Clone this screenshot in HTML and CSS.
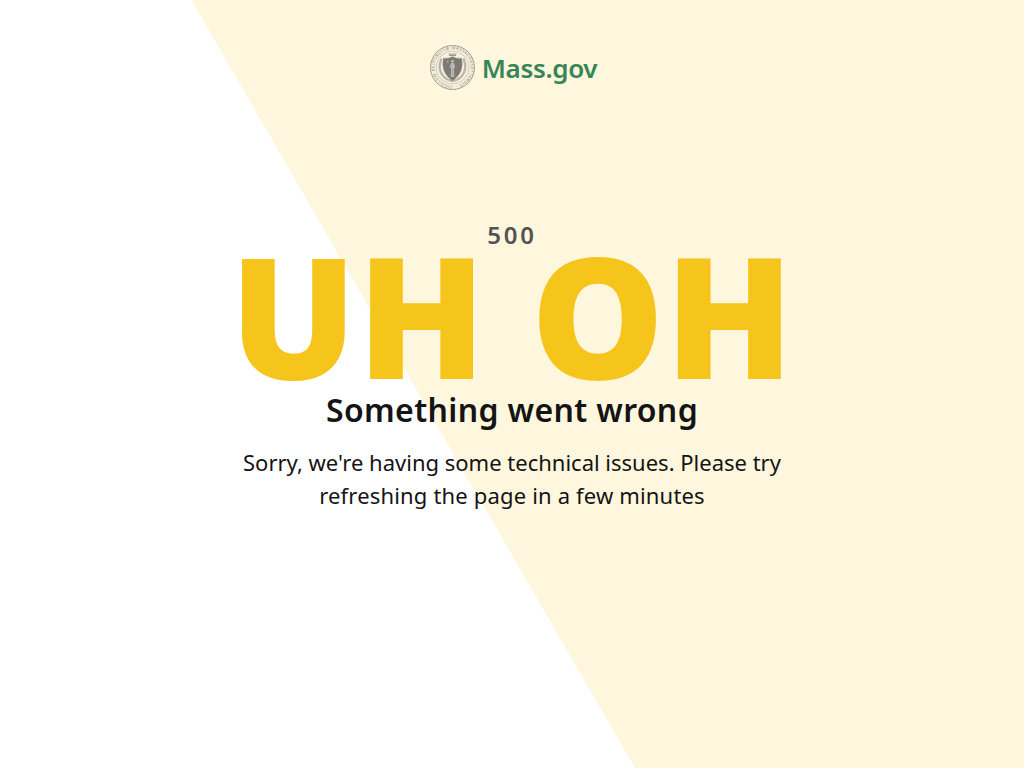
FILE: index.html
```
<!DOCTYPE html>
<html lang="en">
<head>
<meta charset="utf-8">
<title>Mass.gov</title>
<link rel="stylesheet" href="styles.css">
</head>
<body>
<div class="page">
  <header class="header">
    <svg class="seal" viewBox="0.5 0.5 45 45" aria-hidden="true">
      <defs><path id="ring" d="M23 41.2A18.2 18.2 0 1 1 23.1 41.2"/></defs>
      <circle cx="23" cy="23" r="22" fill="#f6efdb" stroke="#a29e94" stroke-width="1"/>
      <text class="seal-text"><textPath href="#ring" textLength="110">SIGILLUM REIPUBLICÆ MASSACHUSETTENSIS ·</textPath></text>
      <circle cx="23" cy="23" r="16.4" fill="#f9f1dd" stroke="#b7b2a6" stroke-width=".6"/>
      <path d="M19 9.600h8M19.500 11h7" fill="none" stroke="#99958b" stroke-width="1"/>
      <path d="M12 14Q7.500 25 14 32q4 4 9 4.500 5-.500 9-4.500Q38.500 25 34 14" fill="none" stroke="#bcb6a8" stroke-width="2.300"/>
      <path d="M14 13.700q4.500.800 9-1.500 4.500 2.300 9 1.500 3.200 14.200-9 22.500-12.200-8.300-9-22.500z" fill="#7c7a76" stroke="#918e86" stroke-width=".6"/>
      <circle cx="23" cy="16.800" r="1.200" fill="#cec8b9"/>
      <path d="M21.500 18.400h3l1.100 4.200-1.200 1.600.4 8.300h-3.600l.4-8.300-1.200-1.600z" fill="#bdb8ab"/>
      <path d="M23 24v8" stroke="#a29e94" stroke-width=".6"/>
      <circle cx="18.300" cy="17.200" r=".7" fill="#d6d0c0"/>
    </svg>
    <span class="brand">Mass.gov</span>
  </header>
  <main class="message">
    <div class="code">500</div>
    <div class="title">UH OH</div>
    <h1 class="subtitle">Something went wrong</h1>
    <p class="text">Sorry, we're having some technical issues. Please try<br><span class="text-end">refreshing the page in a few minutes</span></p>
  </main>
</div>
</body>
</html>
```
FILE: styles.css
```
body {
  margin: 0;
  font-family: "Noto Sans", sans-serif;
  color: #141414;
}
.page {
  height: 768px;
  overflow: hidden;
  text-align: center;
  background: linear-gradient(60deg, #fff 43.27%, #fef6dd 43.27%);
}
.header {
  display: flex;
  align-items: center;
  justify-content: center;
  gap: 7px;
  padding: 44px 0 0 3px;
  height: 47px;
}
.seal { width: 45px; height: 45px; }
.seal-text { font-size: 4px; font-weight: 500; fill: #96928a; }
.brand {
  color: #388557;
  font-size: 26px;
  font-weight: 600;
  line-height: 47px;
  letter-spacing: -0.35px;
  padding-top: 2px;
}
.message { padding-top: 128px; }
.code { font-size: 24px; font-weight: 600; line-height: 32px; letter-spacing: 2.8px; color: #535353; }
.title { font-size: 168px; font-weight: 900; line-height: 134px; letter-spacing: 0.5px; margin: -4px 0 5px; color: #f6c51b; }
.subtitle { margin: 0; font-size: 32px; font-weight: 600; line-height: 48px; letter-spacing: 0.35px; }
.text { margin: 12px 0 0; font-size: 22px; line-height: 33px; }
.text-end { letter-spacing: 0.17px; }
```
